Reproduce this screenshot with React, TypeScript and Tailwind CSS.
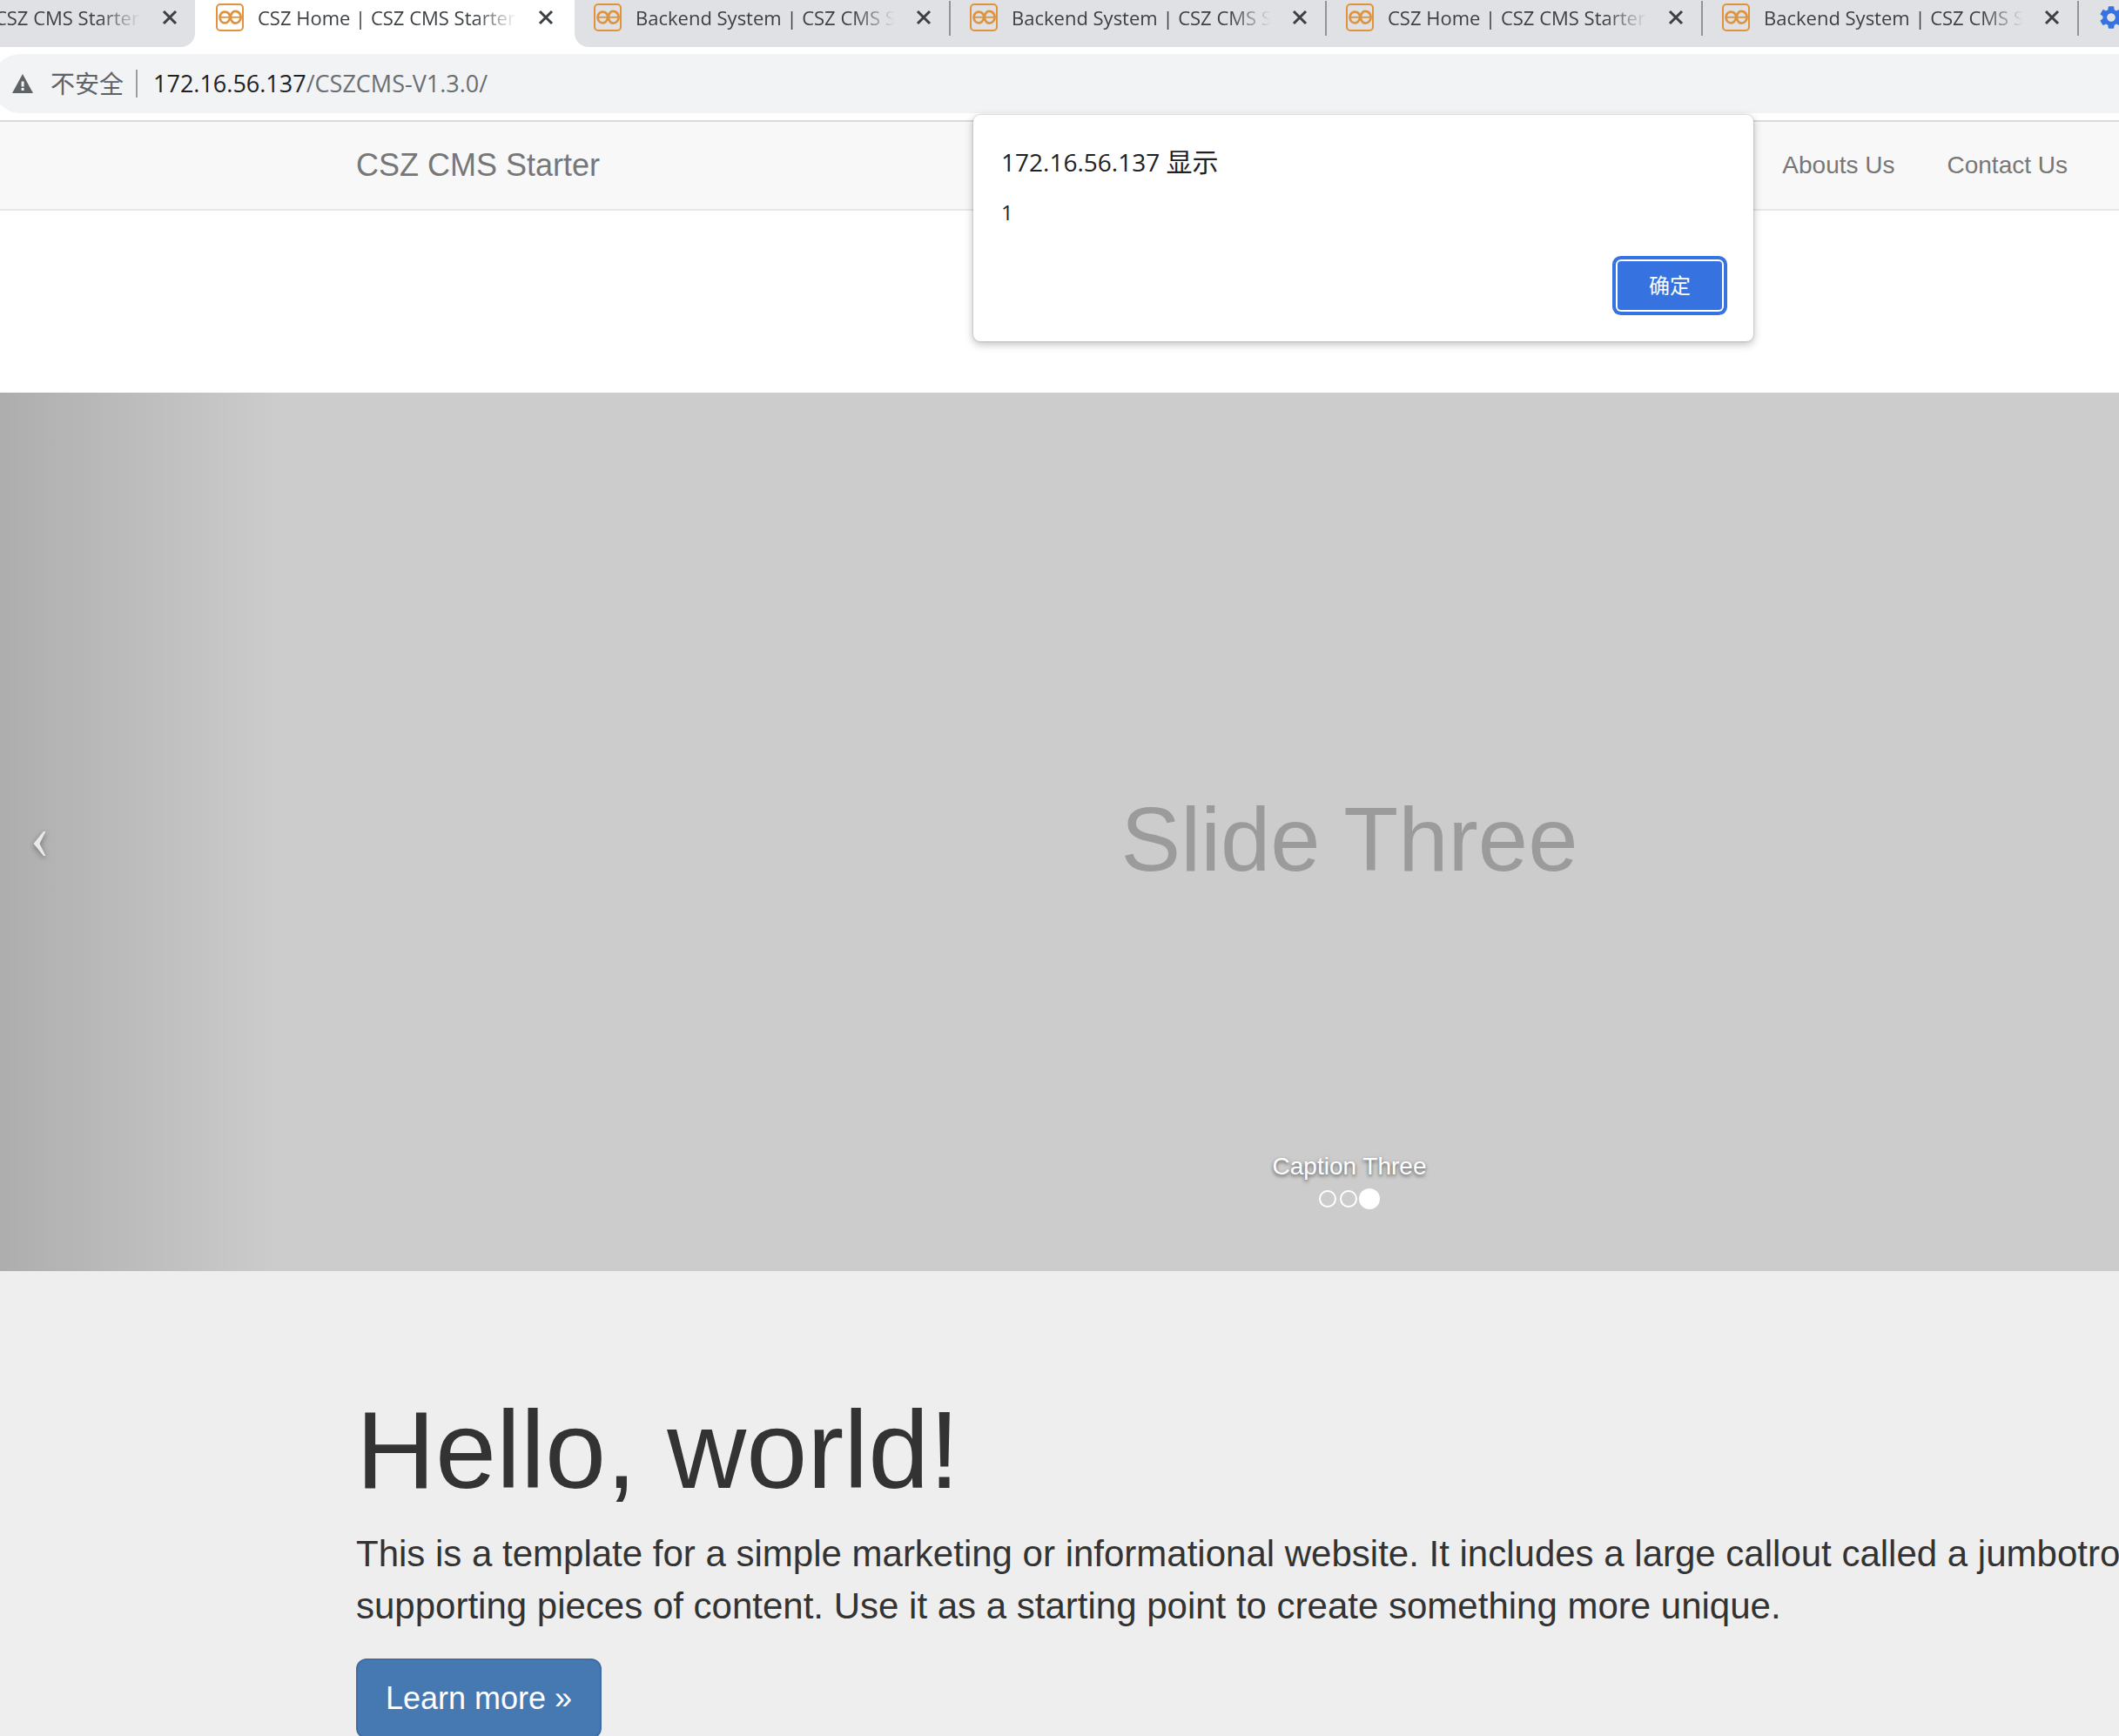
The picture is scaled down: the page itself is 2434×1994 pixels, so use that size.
import React from "react";
import { MdSettings } from "react-icons/md";

const UI_FONT = "font-['Open_Sans','Noto_Sans_CJK_SC',sans-serif]";
const PAGE_FONT = "font-['Liberation_Sans',Arial,sans-serif]";

function Favicon() {
  return (
    <svg viewBox="0 0 32 32" className="size-8 shrink-0" fill="none" stroke="#e0933c" aria-hidden="true">
      <rect x="1" y="1" width="30" height="30" rx="4" strokeWidth="2" />
      <path
        d="M16.5 15.5C15.6 11.6 13.4 9.6 10.4 9.6C6.8 9.6 4.6 12.4 4.6 15.8C4.6 19.4 7 22.4 10.4 22.4C13.6 22.4 15.4 19.6 16.5 15.5C17.6 11 19.4 8.8 22.2 8.8C25.8 8.8 28.6 11.8 28.6 15.6C28.6 19.6 25.8 22.6 22.2 22.6C19.2 22.6 17.4 19.8 16.5 15.5Z"
        strokeWidth="2.8"
      />
      <path d="M5 15.8H28" strokeWidth="1.8" />
    </svg>
  );
}

function CloseIcon() {
  return (
    <svg viewBox="0 0 18 18" className="size-[18px]" fill="none" stroke="#3c4043" strokeWidth="3" aria-hidden="true">
      <path d="M2 2L16 16M16 2L2 16" />
    </svg>
  );
}

function Tab({ title, className }: { title: string; className: string }) {
  return (
    <div className={"flex h-[54px] shrink-0 pt-1 " + className}>
      <a href="#tab" className="flex h-8 items-center gap-4">
        <Favicon />
        <span className="w-[298px] overflow-hidden text-[22px] leading-8 whitespace-nowrap text-[#3c4043] [mask-image:linear-gradient(to_right,black_calc(100%-48px),transparent)]">
          {title}
        </span>
      </a>
      <button type="button" aria-label="Close tab" className="ml-6 flex h-8 items-center">
        <CloseIcon />
      </button>
    </div>
  );
}

function Divider() {
  return <div className="mt-px h-10 w-0.5 shrink-0 bg-[#919396]" />;
}

const HOME = "CSZ Home | CSZ CMS Starter";
const BACKEND = "Backend System | CSZ CMS Starter";

function TabStrip() {
  return (
    <div className="flex overflow-hidden bg-white">
      <Tab title={HOME} className="-ml-[208px] w-[432px] rounded-br-2xl bg-[#dfe1e5] pl-6" />
      <Tab title={HOME} className="w-[436px] bg-white pl-6" />
      <div className="flex grow rounded-bl-2xl bg-[#dfe1e5]">
        {[BACKEND, BACKEND, HOME, BACKEND].map((title, i) => (
          <React.Fragment key={i}>
            <Tab title={title} className="w-[430px] pl-[22px]" />
            <Divider />
          </React.Fragment>
        ))}
        <MdSettings className="mt-1 ml-[21px] size-8 shrink-0 text-[#3673e0]" />
      </div>
    </div>
  );
}

function AddressBar() {
  return (
    <div className="-ml-[10px] overflow-hidden bg-white py-2">
      <div className="-mr-10 flex h-[68px] items-center rounded-full bg-[#f1f3f4] pl-6">
        <button type="button" className="flex items-center gap-5 text-[#5f6368]">
          <svg viewBox="0 0 24 22" className="h-[22px] w-6" aria-hidden="true">
            <path d="M12 0L24 22H0Z" fill="#5f6368" />
            <path d="M10.6 8.5h3v6h-3zM10.6 16h3v3h-3z" fill="#f1f3f4" />
          </svg>
          <span className="text-[28px] leading-9">不安全</span>
        </button>
        <div className="ml-3.5 h-8 w-0.5 bg-[#9a9da1]" />
        <div className="ml-[18px] text-[27px] leading-9 text-[#6a6e72]">
          <span className="text-[#202124]">172.16.56.137</span>/CSZCMS-V1.3.0/
        </div>
      </div>
    </div>
  );
}

function AlertDialog() {
  return (
    <div
      role="alertdialog"
      aria-labelledby="alert-title"
      className={
        "absolute top-[132px] left-[1118px] flex h-[260px] w-[896px] flex-col rounded-lg bg-white px-8 pt-[34px] text-[#202124] shadow-[0_0_1px_1px_rgba(60,64,67,0.12),0_3px_8px_1px_rgba(60,64,67,0.3)] " +
        UI_FONT
      }
    >
      <h2 id="alert-title" className="text-[28px] leading-10">
        172.16.56.137 <span className="text-[30px]">显示</span>
      </h2>
      <p className="mt-[22px] text-[24px] leading-8">1</p>
      <button
        type="button"
        className="mt-10 mr-1 flex h-14 w-[120px] items-center justify-center self-end rounded bg-[#3673e0] text-[24px] text-white shadow-[0_0_0_2px_white,0_0_0_6px_#3673e0]"
      >
        确定
      </button>
    </div>
  );
}

function Navbar() {
  return (
    <nav className="flex h-[104px] items-center justify-between border-t-2 border-b-2 border-t-[#dadada] border-b-[#e7e7e7] bg-[#f8f8f8] pr-[59px] pl-[409px] text-[#777]">
      <a href="#home" className="text-[36px] leading-10">
        CSZ CMS Starter
      </a>
      <div className="flex gap-[60px] text-[28px] leading-10">
        <a href="#about">Abouts Us</a>
        <a href="#contact">Contact Us</a>
      </div>
    </nav>
  );
}

function Carousel() {
  return (
    <section className="relative mt-[209px] h-[1009px] bg-[#ccc]">
      <button
        type="button"
        aria-label="Previous"
        className="absolute inset-y-0 left-0 flex w-[320px] items-center bg-linear-to-r from-black/15 to-transparent pt-[27px] pl-[38px]"
      >
        <svg
          viewBox="0 0 15 28"
          className="h-7 w-[15px] overflow-visible drop-shadow-[0_2px_3px_rgba(0,0,0,0.4)]"
          aria-hidden="true"
        >
          <path d="M.5 14L12 0H14.5L7.5 14L14.5 28H12Z" fill="#e9e9e9" />
        </svg>
      </button>
      <div className="flex h-full flex-col items-center pt-[454px] pl-[666px]">
        <p className="text-[103px] leading-[120px] text-[#9b9b9b]">Slide Three</p>
        <p className="mt-[295px] text-[28px] leading-10 text-white [text-shadow:0_2px_4px_rgba(0,0,0,0.6)]">
          Caption Three
        </p>
        <div className="mt-[5px] flex items-center gap-1">
          <button type="button" aria-label="Slide 1" className="size-5 rounded-full border-2 border-white" />
          <button type="button" aria-label="Slide 2" className="size-5 rounded-full border-2 border-white" />
          <button type="button" aria-label="Slide 3" className="-ml-0.5 size-6 rounded-full bg-white" />
        </div>
      </div>
    </section>
  );
}

function Jumbotron() {
  return (
    <section className="grow bg-[#eee] pt-[137px] pb-24 pl-[409px] text-[#333]">
      <h1 className="text-[126px] leading-[138px]">Hello, world!</h1>
      <p className="mt-5 text-[42px] leading-[60px] whitespace-nowrap">
        This is a template for a simple marketing or informational website. It includes a large callout called a jumbotron
        <br />
        supporting pieces of content. Use it as a starting point to create something more unique.
      </p>
      <a
        href="#learn"
        className="mt-[30px] inline-flex h-[92px] items-center rounded-xl border-2 border-[#3f6da3] bg-[#4679b2] px-8 text-[36px] leading-10 text-white"
      >
        Learn more »
      </a>
    </section>
  );
}

export default function App() {
  return (
    <div className={"relative flex h-screen flex-col overflow-hidden bg-white " + PAGE_FONT}>
      <header className={"shrink-0 " + UI_FONT}>
        <TabStrip />
        <AddressBar />
      </header>
      <main className="flex shrink-0 flex-col">
        <Navbar />
        <Carousel />
        <Jumbotron />
      </main>
      <AlertDialog />
    </div>
  );
}
